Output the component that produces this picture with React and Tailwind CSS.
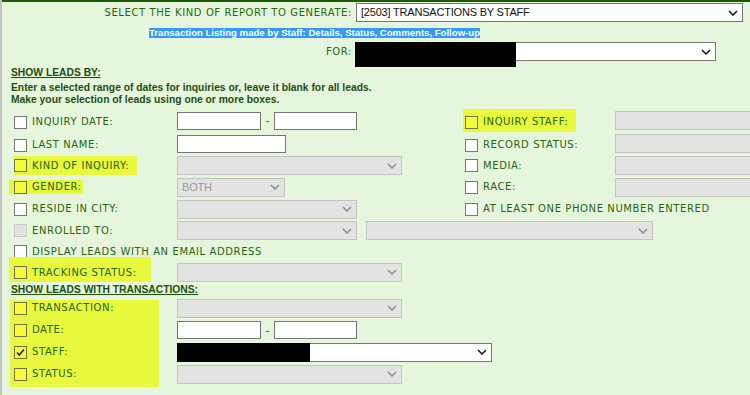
import React from "react";

const LBL =
  "text-[10px] tracking-[0.6px] text-[#24660e] whitespace-nowrap font-['DejaVu_Sans',sans-serif] leading-none";
const BOLD =
  "font-['Liberation_Sans',Arial,sans-serif] font-bold text-[10.3px] text-[#1d4f0c] whitespace-nowrap";

function Chev({ disabled }) {
  return (
    <svg width="10" height="6" viewBox="0 0 10 6" className="shrink-0">
      <path
        d="M1 1L5 5L9 1"
        fill="none"
        stroke={disabled ? "#8a8a8a" : "#111111"}
        strokeWidth="1.5"
      />
    </svg>
  );
}

function Sel({ className = "", disabled = true, children }) {
  return (
    <div
      className={`relative flex items-center justify-between h-[19px] border pl-[4px] pr-[4px] shrink-0 ${
        disabled ? "bg-[#e3e3e3] border-[#c3c3c3]" : "bg-white border-[#767676]"
      } ${className}`}
    >
      <span
        className={`font-['Liberation_Sans',Arial,sans-serif] text-[11px] tracking-[-0.2px] leading-none whitespace-nowrap ${
          disabled ? "text-[#9a9a9a]" : "text-[#111111]"
        }`}
      >
        {children}
      </span>
      <Chev disabled={disabled} />
    </div>
  );
}

function Inp({ className = "", disabled = false }) {
  return (
    <div
      className={`h-[18px] border shrink-0 ${
        disabled ? "bg-[#e3e3e3] border-[#c3c3c3]" : "bg-white border-[#767676]"
      } ${className}`}
    />
  );
}

function Cb({ variant = "white", checked = false }) {
  const cls =
    variant === "yellow"
      ? "bg-[#f6fb3a] border-[#72724a]"
      : variant === "disabled"
      ? "bg-[#e2e2e2] border-[#c6c6c6]"
      : "bg-white border-[#767676]";
  return (
    <div
      className={`w-[13px] h-[13px] border shrink-0 flex items-center justify-center ${cls}`}
    >
      {checked && (
        <svg width="11" height="11" viewBox="0 0 11 11">
          <path
            d="M2 5.5L4.3 8L9 2.5"
            fill="none"
            stroke="#222222"
            strokeWidth="1.6"
          />
        </svg>
      )}
    </div>
  );
}

function Lab({ children }) {
  return <span className={`ml-[5px] ${LBL}`}>{children}</span>;
}

function Dash() {
  return (
    <span className="w-[13px] shrink-0 text-center text-[11px] leading-none text-[#24660e] font-['DejaVu_Sans',sans-serif]">
      -
    </span>
  );
}

export default function App() {
  return (
    <div className="w-[750px] h-[395px] overflow-hidden bg-[#e6f6dd] border-l-2 border-[#c2c2c2]">
      <div className="h-[2px] bg-[#1c5a06]" />

      {/* Report kind */}
      <div className="flex items-center mt-[1px] h-[19px]">
        <div className={`w-[350px] shrink-0 text-right pt-[1px] ${LBL}`}>
          SELECT THE KIND OF REPORT TO GENERATE:
        </div>
        <Sel disabled={false} className="ml-[4px] w-[387px]">
          [2503] TRANSACTIONS BY STAFF
        </Sel>
      </div>

      {/* Description */}
      <div className="mt-[6px] h-[10px] flex">
        <span className="ml-[147px] bg-[#3399ff] text-white font-['Liberation_Sans',Arial,sans-serif] font-bold text-[9.6px] leading-[10px] whitespace-nowrap">
          Transaction Listing made by Staff: Details, Status, Comments, Follow-up
        </span>
      </div>

      {/* FOR */}
      <div className="flex items-center mt-[4px] h-[19px]">
        <div className={`w-[350px] shrink-0 text-right ${LBL}`}>FOR:</div>
        <div className="relative ml-[3px] shrink-0">
          <Sel disabled={false} className="w-[361px]"></Sel>
          <div className="absolute left-0 top-0 w-[161px] h-[25px] bg-black" />
        </div>
      </div>

      {/* Headings */}
      <div className={`mt-[6px] ml-[9px] h-[12px] leading-[12px] underline ${BOLD}`}>
        SHOW LEADS BY:
      </div>
      <div className={`mt-[3px] ml-[9px] h-[12px] leading-[12px] ${BOLD}`}>
        Enter a selected range of dates for inquiries or, leave it blank for all leads.
      </div>
      <div className={`ml-[9px] h-[12px] leading-[12px] ${BOLD}`}>
        Make your selection of leads using one or more boxes.
      </div>

      <div className="mt-[3px]">
        {/* Row 1 */}
        <div className="flex items-center h-[23px]">
          <div className="w-[175px] shrink-0 flex items-center pl-[12px] pt-[3px]">
            <Cb />
            <Lab>INQUIRY DATE:</Lab>
          </div>
          <div className="w-[286px] shrink-0 flex items-center">
            <Inp className="w-[84px]" />
            <Dash />
            <Inp className="w-[83px]" />
          </div>
          <div className="w-[152px] shrink-0 flex items-center">
            <div className="flex items-center h-[23px] w-[113px] bg-[#e8f83c] pl-[2px] pt-[3px]">
              <Cb variant="yellow" />
              <Lab>INQUIRY STAFF:</Lab>
            </div>
          </div>
          <Inp disabled className="w-[150px] h-[19px]" />
        </div>

        {/* Row 2 */}
        <div className="flex items-center h-[23px]">
          <div className="w-[175px] shrink-0 flex items-center pl-[12px] pt-[3px]">
            <Cb />
            <Lab>LAST NAME:</Lab>
          </div>
          <div className="w-[286px] shrink-0 flex items-center">
            <Inp className="w-[109px]" />
          </div>
          <div className="w-[152px] shrink-0 flex items-center pl-[2px] pt-[3px]">
            <Cb />
            <Lab>RECORD STATUS:</Lab>
          </div>
          <Inp disabled className="w-[150px] h-[19px]" />
        </div>

        {/* Row 3 */}
        <div className="flex items-center h-[21px]">
          <div className="w-[175px] shrink-0 flex items-center pl-[12px]">
            <div className="flex items-center h-[19px] w-[123px] bg-[#e8f83c]">
              <Cb variant="yellow" />
              <Lab>KIND OF INQUIRY:</Lab>
            </div>
          </div>
          <div className="w-[286px] shrink-0 flex items-center">
            <Sel className="w-[225px]"></Sel>
          </div>
          <div className="w-[152px] shrink-0 flex items-center pl-[2px]">
            <Cb />
            <Lab>MEDIA:</Lab>
          </div>
          <Inp disabled className="w-[150px] h-[19px]" />
        </div>

        {/* Row 4 */}
        <div className="flex items-center h-[22px]">
          <div className="w-[175px] shrink-0 flex items-center pl-[7px]">
            <div className="flex items-center h-[14px] w-[74px] pl-[5px] bg-[#e8f83c]">
              <Cb variant="yellow" />
              <Lab>GENDER:</Lab>
            </div>
          </div>
          <div className="w-[286px] shrink-0 flex items-center">
            <Sel className="w-[108px]">BOTH</Sel>
          </div>
          <div className="w-[152px] shrink-0 flex items-center pl-[2px]">
            <Cb />
            <Lab>RACE:</Lab>
          </div>
          <Inp disabled className="w-[150px] h-[19px]" />
        </div>

        {/* Row 5 */}
        <div className="flex items-center h-[22px]">
          <div className="w-[175px] shrink-0 flex items-center pl-[12px]">
            <Cb />
            <Lab>RESIDE IN CITY:</Lab>
          </div>
          <div className="w-[286px] shrink-0 flex items-center">
            <Sel className="w-[180px]"></Sel>
          </div>
          <div className="flex shrink-0 items-center pl-[2px]">
            <Cb />
            <span className={`ml-[5px] ${LBL} tracking-[0.3px]`}>
              AT LEAST ONE PHONE NUMBER ENTERED
            </span>
          </div>
        </div>

        {/* Row 6 */}
        <div className="flex items-center h-[21px]">
          <div className="w-[175px] shrink-0 flex items-center pl-[12px]">
            <Cb variant="disabled" />
            <Lab>ENROLLED TO:</Lab>
          </div>
          <Sel className="w-[180px]"></Sel>
          <Sel className="ml-[9px] w-[287px]"></Sel>
        </div>

        {/* Row 7 */}
        <div className="flex items-center h-[21px]">
          <div className="flex items-center pl-[12px]">
            <Cb />
            <Lab>DISPLAY LEADS WITH AN EMAIL ADDRESS</Lab>
          </div>
        </div>

        {/* Row 8 */}
        <div className="flex items-center h-[20px]">
          <div className="w-[175px] shrink-0 flex items-center pl-[7px]">
            <div className="flex items-center h-[25px] -mt-[6px] pt-[7px] w-[142px] pl-[5px] bg-[#e8f83c]">
              <Cb variant="yellow" />
              <Lab>TRACKING STATUS:</Lab>
            </div>
          </div>
          <Sel className="w-[225px]"></Sel>
        </div>

        {/* Heading */}
        <div className={`ml-[9px] h-[15px] leading-[15px] underline ${BOLD}`}>
          SHOW LEADS WITH TRANSACTIONS:
        </div>

        {/* Transactions */}
        <div className="flex items-start">
          <div className="ml-[8px] mt-[3px] w-[149px] h-[87px] shrink-0 bg-[#e8f83c]">
            <div className="-mt-[3px] pl-[4px]">
              <div className="flex items-center h-[22px]">
                <Cb variant="yellow" />
                <Lab>TRANSACTION:</Lab>
              </div>
              <div className="flex items-center h-[22px]">
                <Cb variant="yellow" />
                <Lab>DATE:</Lab>
              </div>
              <div className="flex items-center h-[22px]">
                <Cb variant="yellow" checked />
                <Lab>STAFF:</Lab>
              </div>
              <div className="flex items-center h-[22px]">
                <Cb variant="yellow" />
                <Lab>STATUS:</Lab>
              </div>
            </div>
          </div>
          <div className="ml-[18px] shrink-0">
            <div className="flex items-center h-[22px]">
              <Sel className="w-[225px]"></Sel>
            </div>
            <div className="flex items-center h-[22px]">
              <Inp className="w-[84px]" />
              <Dash />
              <Inp className="w-[83px]" />
            </div>
            <div className="flex items-center h-[22px]">
              <div className="relative">
                <Sel disabled={false} className="w-[315px]"></Sel>
                <div className="absolute left-0 top-0 w-[133px] h-[19px] bg-black" />
              </div>
            </div>
            <div className="flex items-center h-[22px]">
              <Sel className="w-[225px]"></Sel>
            </div>
          </div>
        </div>
      </div>
    </div>
  );
}
